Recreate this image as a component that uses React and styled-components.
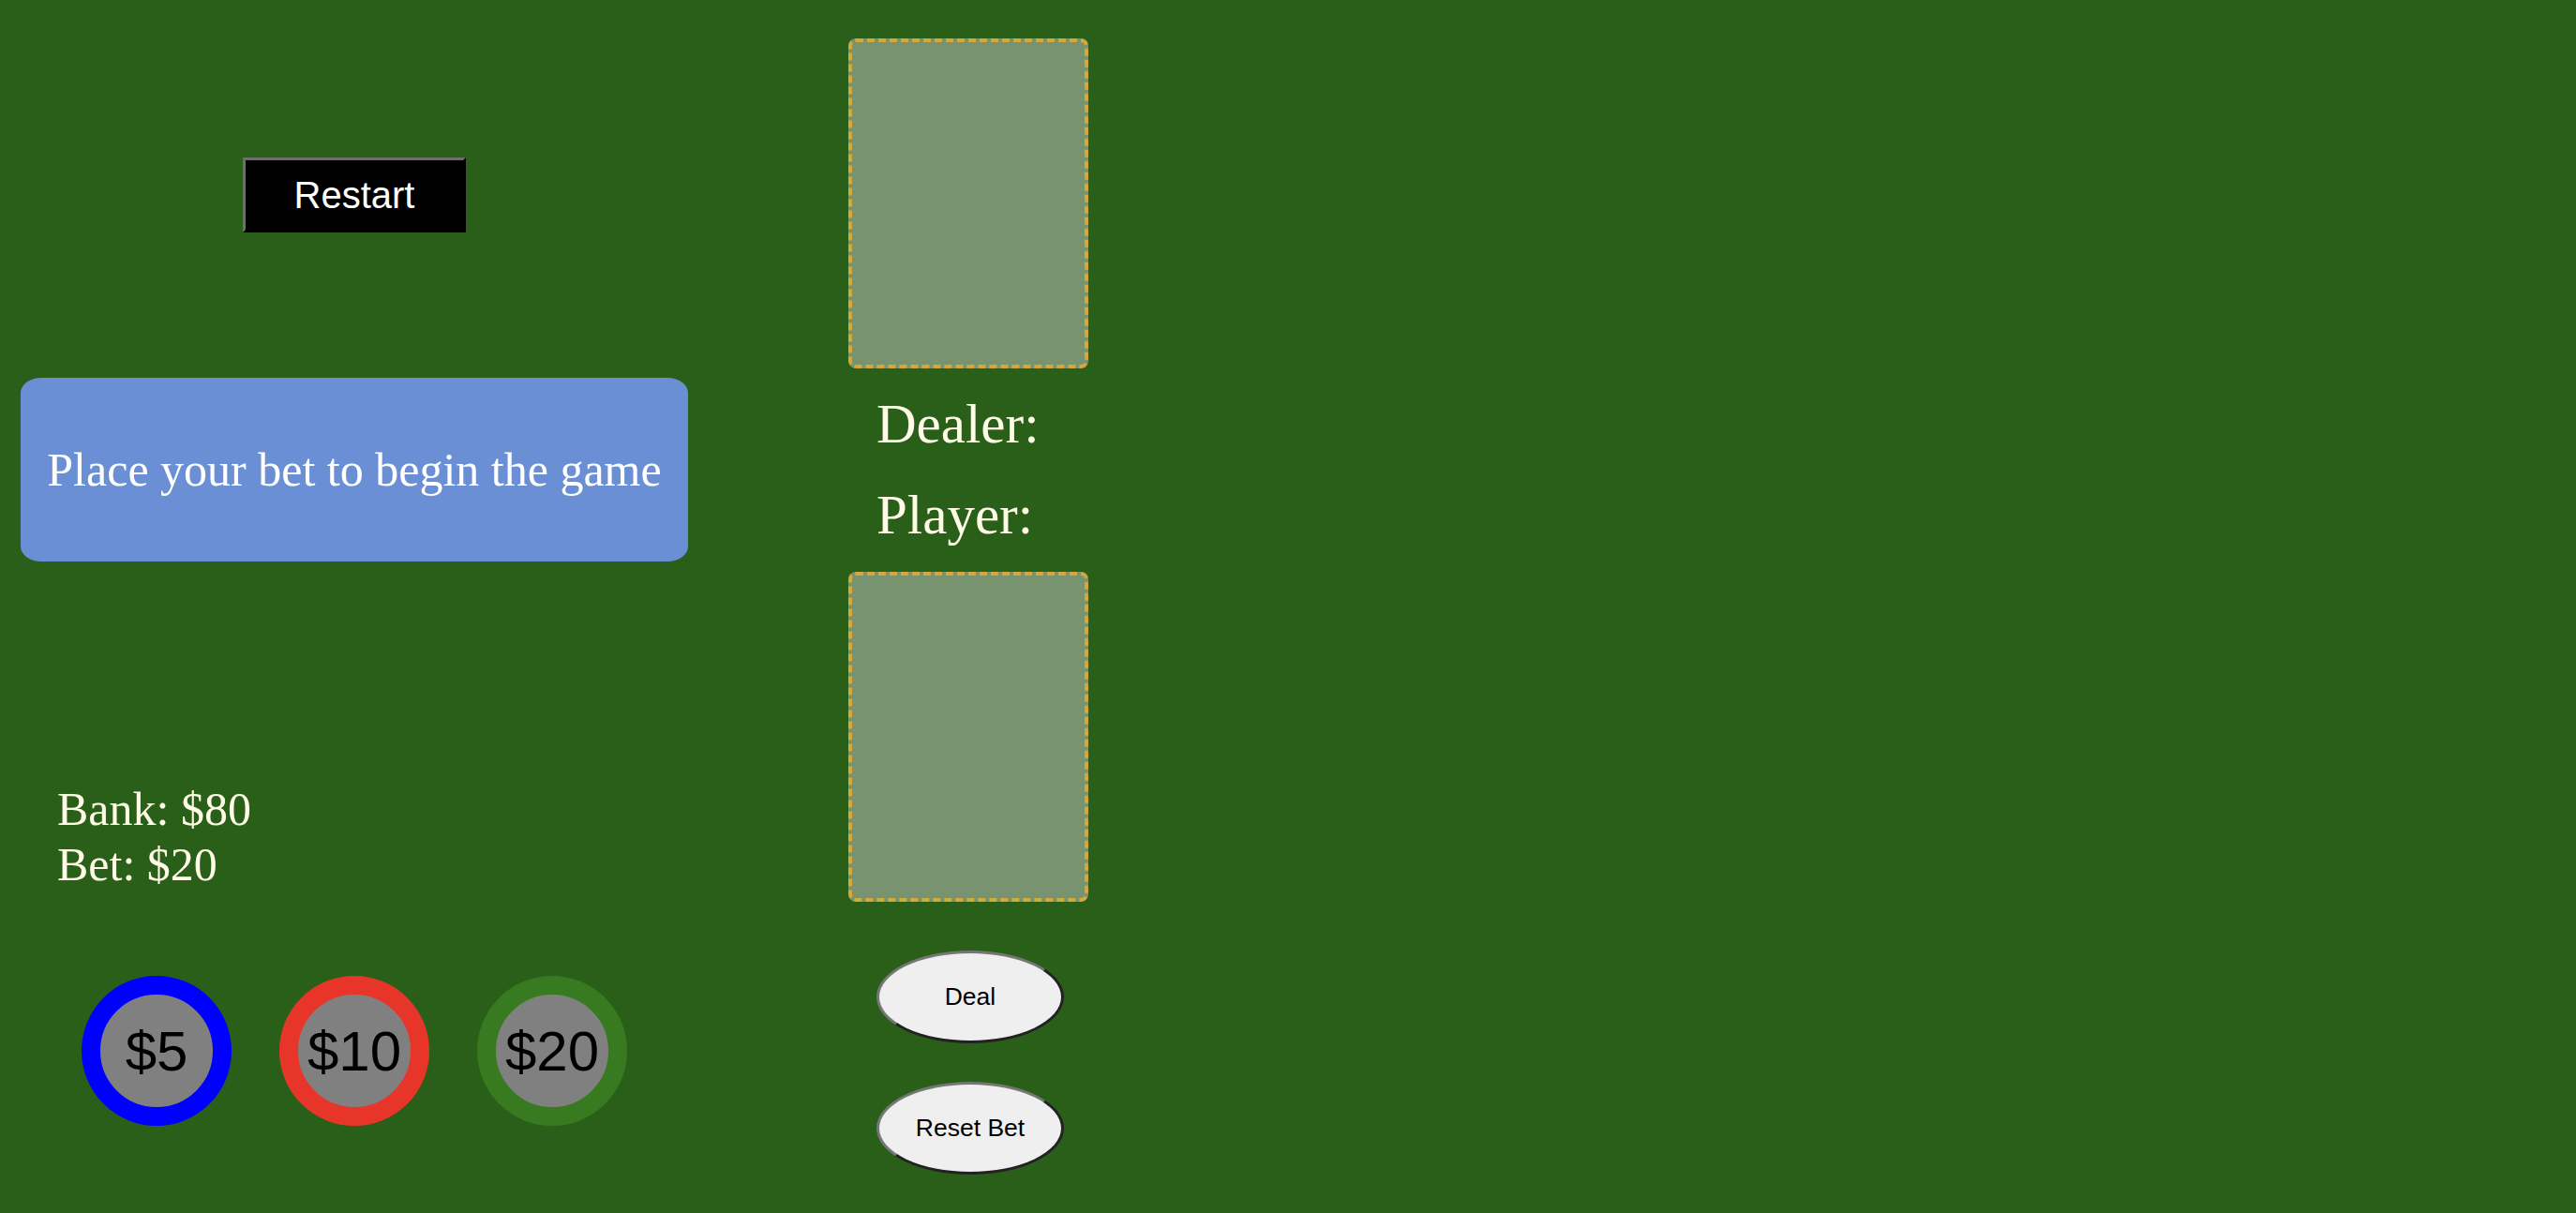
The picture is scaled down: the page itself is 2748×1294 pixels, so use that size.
import React from 'react';
import styled, { createGlobalStyle } from 'styled-components';

const GlobalStyle = createGlobalStyle`
  html, body {
    margin: 0;
    padding: 0;
    background-color: #2a5f1a;
  }
`;

const StyledTable = styled.div`
  display: flex;
  width: 100%;
  height: 1294px;
  background-color: #2a5f1a;
  overflow: hidden;
`;

const StyledLeftPanel = styled.div`
  display: flex;
  width: 756px;
  flex-direction: column;
  align-items: center;
`;

const StyledRestartButton = styled.button`
  margin-top: 168px;
  width: 238px;
  height: 80px;
  padding: 0;
  font-family: 'Liberation Sans', Arial, sans-serif;
  font-size: 40px;
  color: #ffffff;
  background-color: #000000;
  border: 3px outset #6e6e6e;
  border-right-color: #2b2b2b;
  border-bottom-color: #2b2b2b;
`;

const StyledMessage = styled.div`
  display: flex;
  margin-top: 155px;
  width: 712px;
  height: 196px;
  align-items: center;
  justify-content: center;
  font-family: 'Liberation Serif', 'Times New Roman', serif;
  font-size: 50px;
  color: #ffffff;
  background-color: #6a8fd4;
  border-radius: 22px / 16px;
`;

const StyledBankInfo = styled.div`
  align-self: stretch;
  margin-top: 235px;
  padding-left: 61px;
  font-family: 'Liberation Serif', 'Times New Roman', serif;
  font-size: 50px;
  line-height: 59px;
  color: #fffbe6;
`;

const StyledChipRow = styled.div`
  display: flex;
  margin-top: 89px;
  gap: 51px;
`;

const StyledChip = styled.button`
  display: flex;
  width: 160px;
  height: 160px;
  padding: 0;
  align-items: center;
  justify-content: center;
  font-family: 'Liberation Sans', Arial, sans-serif;
  font-size: 60px;
  color: #000000;
  background-color: #808080;
  border: 20px solid ${({ ring }) => ring};
  border-radius: 50%;
`;

const StyledCenterPanel = styled.div`
  display: flex;
  margin-left: 149px;
  width: 256px;
  flex-direction: column;
`;

const StyledCardSlot = styled.div`
  box-sizing: border-box;
  margin-top: ${({ top }) => top}px;
  width: 256px;
  height: 352px;
  background-color: #789370;
  border: 4px dashed #d6a73b;
  border-radius: 8px;
`;

const StyledScores = styled.div`
  margin: 11px 0 12px;
  padding-left: 30px;
  font-family: 'Liberation Serif', 'Times New Roman', serif;
  font-size: 59px;
  line-height: 97px;
  color: #fffbe6;
  white-space: nowrap;
`;

const StyledRoundButton = styled.button`
  box-sizing: border-box;
  margin-top: ${({ top }) => top}px;
  margin-left: 30px;
  width: 200px;
  height: 99px;
  padding: 0;
  font-family: 'Liberation Sans', Arial, sans-serif;
  font-size: 26.5px;
  color: #000000;
  background-color: #efefef;
  border: 3px solid #767676;
  border-right-color: #222222;
  border-bottom-color: #222222;
  border-radius: 50%;
`;

const chips = [
  { value: 5, ring: '#0000ff' },
  { value: 10, ring: '#e8352a' },
  { value: 20, ring: '#377a20' },
];

const App = () => {
  const bank = 80;
  const bet = 20;

  return (
    <>
      <GlobalStyle />
      <StyledTable>
        <StyledLeftPanel>
          <StyledRestartButton>Restart</StyledRestartButton>
          <StyledMessage>Place your bet to begin the game</StyledMessage>
          <StyledBankInfo>
            <div>Bank: ${bank}</div>
            <div>Bet: ${bet}</div>
          </StyledBankInfo>
          <StyledChipRow>
            {chips.map(chip => (
              <StyledChip key={chip.value} ring={chip.ring}>
                ${chip.value}
              </StyledChip>
            ))}
          </StyledChipRow>
        </StyledLeftPanel>
        <StyledCenterPanel>
          <StyledCardSlot top={41} />
          <StyledScores>
            <div>Dealer:</div>
            <div>Player:</div>
          </StyledScores>
          <StyledCardSlot top={0} />
          <StyledRoundButton top={52}>Deal</StyledRoundButton>
          <StyledRoundButton top={41}>Reset Bet</StyledRoundButton>
        </StyledCenterPanel>
      </StyledTable>
    </>
  );
};

export default App;
